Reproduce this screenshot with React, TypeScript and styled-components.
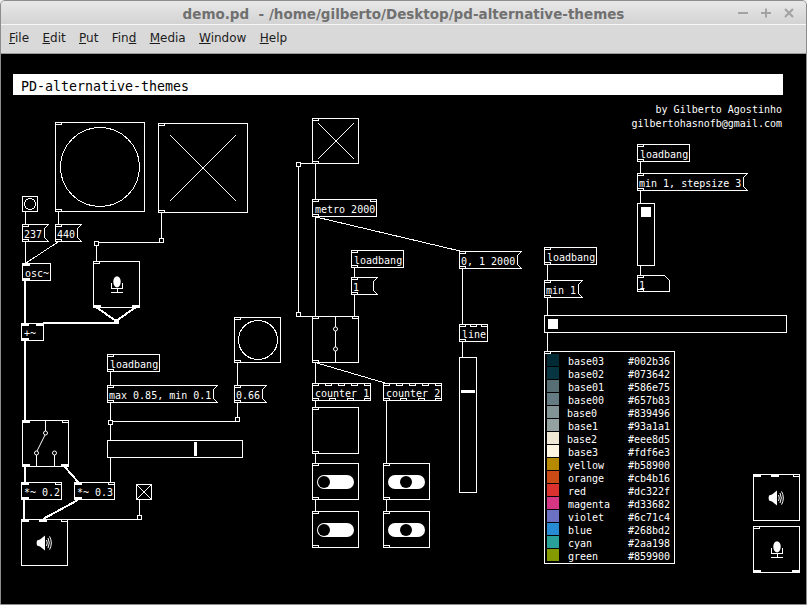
import * as React from "react"
import styled, { createGlobalStyle } from "styled-components"

// page position of the patch canvas, node coordinates below are page coordinates
const ORIGIN_X = 1
const ORIGIN_Y = 54

const Global = createGlobalStyle`
  html, body {
    margin: 0;
    padding: 0;
    background: #eeeeee;
  }
`

const Styled = {
  Window: styled.div`
    width: 807px;
    height: 605px;
    box-sizing: border-box;
    display: flex;
    flex-direction: column;
    overflow: hidden;
    border: 1px solid #8c8c8c;
    border-top-left-radius: 5px;
    border-top-right-radius: 5px;
    background: #d9d9d9;
    font-family: "DejaVu Sans", sans-serif;
  `,
  TitleBar: styled.div`
    height: 24px;
    flex: none;
    position: relative;
    display: flex;
    align-items: center;
    justify-content: center;
    padding-top: 2px;
    box-sizing: border-box;
    border-bottom: 1px solid #f7f7f7;
    background: linear-gradient(#e8e8e8, #d3d3d3);
  `,
  TitleText: styled.div`
    font-size: 13.5px;
    font-weight: bold;
    color: #707070;
    white-space: pre;
  `,
  Controls: styled.div`
    position: absolute;
    right: 12px;
    top: 7px;
    display: flex;
    gap: 13px;
  `,
  MenuBar: styled.div`
    height: 29px;
    flex: none;
    display: flex;
    align-items: center;
    gap: 13.35px;
    padding: 0 0 2px 8px;
    box-sizing: border-box;
    border-bottom: 1px solid #9a9a9a;
    background: #d9d9d9;
  `,
  MenuItem: styled.span`
    font-size: 12px;
    color: #1c1c1c;

    u {
      text-underline-offset: 1px;
    }
  `,
  Patch: styled.div`
    position: relative;
    flex: 1;
    background: #000;
    overflow: hidden;
    font-family: "DejaVu Sans Mono", monospace;
    font-size: 10px;
    color: #fff;
  `,
  Header: styled.div`
    display: flex;
    flex-direction: column;
    align-items: flex-end;
    padding: 20px 24px 0 12px;
  `,
  Banner: styled.div`
    align-self: stretch;
    margin-right: -1px;
    height: 21px;
    box-sizing: border-box;
    padding: 2px 0 0 8px;
    margin-bottom: 8px;
    background: #fff;
    color: #000;
    font-size: 13.3px;
    line-height: 21px;
  `,
  Credit: styled.div`
    line-height: 14px;
    white-space: pre;
  `,
  Wires: styled.svg`
    position: absolute;
    left: 0;
    top: 0;
  `,
  Node: styled.div<{ $x: number; $y: number; $w: number; $h: number; $bare?: boolean }>`
    position: absolute;
    left: ${(p) => p.$x - ORIGIN_X}px;
    top: ${(p) => p.$y - ORIGIN_Y}px;
    width: ${(p) => p.$w}px;
    height: ${(p) => p.$h}px;
    box-sizing: border-box;
    border: ${(p) => (p.$bare ? "none" : "1px solid #fff")};
    background: #000;
    display: flex;
    align-items: center;
    justify-content: center;
  `,
  Pad: styled.div<{ $x: number; $y: number; $solid?: boolean }>`
    position: absolute;
    left: ${(p) => p.$x - ORIGIN_X}px;
    top: ${(p) => p.$y - ORIGIN_Y}px;
    width: 5px;
    height: 5px;
    box-sizing: border-box;
    border: 1px solid #fff;
    background: ${(p) => (p.$solid ? "#fff" : "#000")};
  `,
  Label: styled.span`
    margin: 4px auto 0 2px;
    white-space: pre;
    line-height: 12px;
    position: relative;
  `,
  Outline: styled.svg`
    position: absolute;
    left: 0;
    top: 0;
  `,
  Ports: styled.div<{ $side: "top" | "bottom"; $bare?: boolean }>`
    position: absolute;
    left: ${(p) => (p.$bare ? 0 : -1)}px;
    right: ${(p) => (p.$bare ? 0 : -1)}px;
    ${(p) => p.$side}: ${(p) => (p.$bare ? 0 : -1)}px;
    display: flex;
    justify-content: space-between;
    align-items: ${(p) => (p.$side === "top" ? "flex-start" : "flex-end")};
  `,
  Port: styled.div<{ $signal?: boolean; $lean?: boolean }>`
    width: ${(p) => (p.$signal ? 8 : 7)}px;
    height: 3px;
    box-sizing: border-box;
    border: 1px solid #fff;
    background: ${(p) => (p.$signal ? "#fff" : "#000")};
    margin-right: ${(p) => (p.$lean ? 4 : 0)}px;
  `,
  Thumb: styled.div<{ $x: number; $y: number; $w: number; $h: number }>`
    margin: ${(p) => p.$y}px auto auto ${(p) => p.$x}px;
    width: ${(p) => p.$w}px;
    height: ${(p) => p.$h}px;
    background: #fff;
  `,
  Pill: styled.div`
    width: 37px;
    height: 14px;
    box-sizing: border-box;
    padding: 1px;
    border-radius: 7px;
    background: #fff;
    margin-top: 1px;
  `,
  Knob: styled.div<{ $on?: boolean }>`
    margin-left: ${(p) => (p.$on ? 11 : 0)}px;
    width: 12px;
    height: 12px;
    border-radius: 50%;
    background: #000;
  `,
  Palette: styled.div`
    margin: 0 auto auto 0;
    padding: 2px;
    display: flex;
    flex-direction: column;
    gap: 1px;
  `,
  Row: styled.div`
    display: flex;
    align-items: center;
    height: 12px;
  `,
  Swatch: styled.div<{ $color: string }>`
    width: 12px;
    height: 12px;
    background: ${(p) => p.$color};
  `,
  ColorName: styled.span<{ $nudge?: boolean }>`
    width: 60px;
    margin: 4px 0 0 ${(p) => (p.$nudge ? 8 : 9)}px;
    padding-right: ${(p) => (p.$nudge ? 1 : 0)}px;
    line-height: 12px;
  `,
  ColorHex: styled.span`
    margin-top: 4px;
    line-height: 12px;
  `,
}

const COLORS: [string, string, boolean?][] = [
  ["base03", "#002b36"],
  ["base02", "#073642"],
  ["base01", "#586e75"],
  ["base00", "#657b83"],
  ["base0", "#839496", true],
  ["base1", "#93a1a1"],
  ["base2", "#eee8d5", true],
  ["base3", "#fdf6e3"],
  ["yellow", "#b58900"],
  ["orange", "#cb4b16"],
  ["red", "#dc322f"],
  ["magenta", "#d33682"],
  ["violet", "#6c71c4"],
  ["blue", "#268bd2"],
  ["cyan", "#2aa198"],
  ["green", "#859900"],
]

// [x1, y1, x2, y2] control wires, 1px
const CONTROL_WIRES = [
  [25.5, 211, 25.5, 224],
  [58.5, 211, 58.5, 224],
  [25.5, 242, 25.5, 263],
  [58, 242, 26, 263],
  [161.5, 212, 161.5, 240],
  [96, 242.5, 161, 242.5],
  [96.5, 246, 96.5, 261],
  [110.5, 372, 110.5, 385],
  [110.5, 403, 110.5, 420],
  [110.5, 425, 110.5, 440],
  [110.5, 458, 110.5, 482],
  [237.5, 362, 237.5, 385],
  [237.5, 403, 237.5, 417],
  [111, 421.5, 238, 421.5],
  [45.5, 420, 45.5, 431],
  [139.5, 500, 139.5, 515],
  [66, 519.5, 141, 519.5],
  [298.5, 167, 298.5, 312],
  [299, 163.5, 316, 163.5],
  [299, 316.5, 316, 316.5],
  [315.5, 163, 315.5, 199],
  [315.5, 217, 315.5, 316],
  [316, 217, 460, 251],
  [354.5, 268, 354.5, 277],
  [354.5, 295, 354.5, 316],
  [462.5, 269, 462.5, 324],
  [462.5, 342, 462.5, 357],
  [315.5, 363, 315.5, 383],
  [317, 363, 385, 383],
  [315.5, 401, 315.5, 407],
  [315.5, 454, 315.5, 463],
  [315.5, 500, 315.5, 511],
  [386.5, 401, 386.5, 463],
  [386.5, 500, 386.5, 511],
  [640.5, 162, 640.5, 174],
  [640.5, 191, 640.5, 203],
  [640.5, 266, 640.5, 275],
  [547.5, 265, 547.5, 280],
  [547.5, 298, 547.5, 315],
  [547.5, 333, 547.5, 351],
]

// signal wires, 2px
const SIGNAL_WIRES = [
  [25, 281, 25, 323],
  [25, 340, 25, 420],
  [43, 323, 116, 323],
  [96, 307, 116, 321],
  [136, 307, 116, 321],
  [25, 467, 25, 482],
  [65, 467, 78, 482],
  [24, 500, 24, 519],
  [78, 500, 43, 519],
]

const Line = (props: { points: number[][]; width: number }) => (
  <>
    {props.points.map(([x1, y1, x2, y2], i) => (
      <line
        key={i}
        x1={x1}
        y1={y1}
        x2={x2}
        y2={y2}
        stroke="#fff"
        strokeWidth={props.width}
      />
    ))}
  </>
)

const WireLayer = () => (
  <Styled.Wires
    width={805}
    height={550}
    viewBox={`${ORIGIN_X} ${ORIGIN_Y} 805 550`}
    shapeRendering="crispEdges"
  >
    <Line points={CONTROL_WIRES} width={1} />
    <Line points={SIGNAL_WIRES} width={2} />
  </Styled.Wires>
)

type PortKind = "c" | "s" | "m"

type BoxProps = {
  x: number
  y: number
  w: number
  h: number
  text?: string
  top?: PortKind[]
  bottom?: PortKind[]
  children?: React.ReactNode
}

const PortRow = ({
  side,
  ports,
  bare,
}: {
  side: "top" | "bottom"
  ports?: PortKind[]
  bare?: boolean
}) =>
  ports ? (
    <Styled.Ports $side={side} $bare={bare}>
      {ports.map((kind, i) => (
        <Styled.Port key={i} $signal={kind !== "c"} $lean={kind === "m"} />
      ))}
    </Styled.Ports>
  ) : null

const Box = ({ x, y, w, h, text, top, bottom, children }: BoxProps) => (
  <Styled.Node $x={x} $y={y} $w={w} $h={h}>
    {text ? <Styled.Label>{text}</Styled.Label> : null}
    {children}
    <PortRow side="top" ports={top} />
    <PortRow side="bottom" ports={bottom} />
  </Styled.Node>
)

// outlined pd shape without a plain box border: message flag or number corner
const Shaped = ({
  x,
  y,
  w,
  h,
  points,
  text,
}: {
  x: number
  y: number
  w: number
  h: number
  points: string
  text: string
}) => (
  <Styled.Node $x={x} $y={y} $w={w} $h={h} $bare>
    <Styled.Outline width={w} height={h} shapeRendering="crispEdges">
      <polygon points={points} fill="none" stroke="#fff" />
    </Styled.Outline>
    <Styled.Label>{text}</Styled.Label>
    <PortRow side="top" ports={["c"]} bare />
    <PortRow side="bottom" ports={["c"]} bare />
  </Styled.Node>
)

const Message = ({ x, y, w, text }: { x: number; y: number; w: number; text: string }) => (
  <Shaped
    x={x}
    y={y}
    w={w}
    h={18}
    text={text}
    points={`0.5,0.5 ${w - 0.5},0.5 ${w - 4.5},4.5 ${w - 4.5},13.5 ${w - 0.5},17.5 0.5,17.5`}
  />
)

const NumberBox = ({ x, y, w, text }: { x: number; y: number; w: number; text: string }) => (
  <Shaped
    x={x}
    y={y}
    w={w}
    h={17}
    text={text}
    points={`0.5,0.5 ${w - 5.5},0.5 ${w - 0.5},5.5 ${w - 0.5},16.5 0.5,16.5`}
  />
)

const CircleIcon = ({ size }: { size: number }) => (
  <svg width={size} height={size} shapeRendering="crispEdges">
    <circle cx={size / 2} cy={size / 2} r={size / 2 - 0.5} fill="none" stroke="#fff" />
  </svg>
)

const CrossIcon = ({ size }: { size: number }) => (
  <svg width={size} height={size} shapeRendering="crispEdges">
    <line x1={0} y1={0} x2={size} y2={size} stroke="#fff" />
    <line x1={size} y1={0} x2={0} y2={size} stroke="#fff" />
  </svg>
)

const SpeakerIcon = () => (
  <svg width={17} height={16} viewBox="0 0 17 16" fill="none">
    <path d="M1 5.5 L4 4.6 L9 0.5 V15.5 L4 11.4 L1 10.5 Q0.2 8 1 5.5 Z" fill="#fff" />
    <path d="M10.5 5 Q12 8 10.5 11" stroke="#fff" />
    <path d="M12 3 Q14.6 8 12 13" stroke="#fff" />
    <path d="M13.6 1.4 Q17 8 13.6 14.6" stroke="#fff" />
  </svg>
)

const MicIcon = () => (
  <svg width={12} height={18} viewBox="0 0 12 18" fill="none">
    <ellipse cx={6} cy={5.8} rx={3.7} ry={5.6} fill="#fff" />
    <path d="M0.5 7 V12.5 H11.5 V7" stroke="#fff" shapeRendering="crispEdges" />
    <path d="M6.5 12 V17 M0 16.5 H12" stroke="#fff" shapeRendering="crispEdges" />
  </svg>
)

const Toggle = ({ x, y, on }: { x: number; y: number; on?: boolean }) => (
  <Box x={x} y={y} w={47} h={37} top={["c"]} bottom={["c"]}>
    <Styled.Pill>
      <Styled.Knob $on={on} />
    </Styled.Pill>
  </Box>
)

const MENUS: [string, string, string][] = [
  ["", "F", "ile"],
  ["", "E", "dit"],
  ["", "P", "ut"],
  ["Fin", "d", ""],
  ["", "M", "edia"],
  ["", "W", "indow"],
  ["", "H", "elp"],
]

export default function App() {
  return (
    <>
      <Global />
      <Styled.Window>
        <Styled.TitleBar>
          <Styled.TitleText>{"demo.pd  - /home/gilberto/Desktop/pd-alternative-themes"}</Styled.TitleText>
          <Styled.Controls>
            <svg width={10} height={10}>
              <path d="M0 5 H10" stroke="#a3a3a3" strokeWidth={2} />
            </svg>
            <svg width={10} height={10}>
              <path d="M0 5 H10 M5 0.5 V9.5" stroke="#a3a3a3" strokeWidth={2} />
            </svg>
            <svg width={10} height={10}>
              <path d="M1 1 L9 9 M9 1 L1 9" stroke="#a3a3a3" strokeWidth={2.2} />
            </svg>
          </Styled.Controls>
        </Styled.TitleBar>
        <Styled.MenuBar>
          {MENUS.map(([before, key, after]) => (
            <Styled.MenuItem key={before + key + after}>
              {before}
              <u>{key}</u>
              {after}
            </Styled.MenuItem>
          ))}
        </Styled.MenuBar>
        <Styled.Patch>
          <Styled.Header>
            <Styled.Banner>PD-alternative-themes</Styled.Banner>
            <Styled.Credit>by Gilberto Agostinho</Styled.Credit>
            <Styled.Credit>gilbertohasnofb@gmail.com</Styled.Credit>
          </Styled.Header>
          <WireLayer />

          {/* left column: osc, mic and output */}
          <Box x={55} y={122} w={90} h={90} top={["c"]} bottom={["c"]}>
            <CircleIcon size={80} />
          </Box>
          <Box x={158} y={123} w={90} h={90} top={["c"]} bottom={["c"]}>
            <CrossIcon size={66} />
          </Box>
          <Box x={22} y={196} w={16} h={16}>
            <CircleIcon size={12} />
          </Box>
          <Message x={22} y={224} w={27} text="237" />
          <Message x={55} y={224} w={27} text="440" />
          <Styled.Pad $x={94} $y={241} />
          <Styled.Pad $x={159} $y={238} />
          <Box x={22} y={263} w={29} h={18} text="osc~" top={["s"]} bottom={["s"]} />
          <Box x={93} y={261} w={47} h={47} top={["c"]} bottom={["s", "s"]}>
            <MicIcon />
          </Box>
          <Styled.Pad $x={114} $y={319} $solid />
          <Box x={21} y={323} w={23} h={18} text="+~" top={["s", "s"]} bottom={["s"]} />

          <Box x={107} y={354} w={53} h={18} text="loadbang" top={["c"]} bottom={["c"]} />
          <Message x={107} y={385} w={111} text="max 0.85, min 0.1" />
          <Box x={234} y={317} w={47} h={46} top={["c"]} bottom={["c"]}>
            <CircleIcon size={40} />
          </Box>
          <Message x={234} y={385} w={33} text="0.66" />
          <Styled.Pad $x={108} $y={420} />
          <Styled.Pad $x={235} $y={417} />
          <Box x={107} y={440} w={136} h={18}>
            <Styled.Thumb $x={86} $y={1} $w={3} $h={14} />
          </Box>

          <Box x={22} y={420} w={47} h={47} top={["s", "c"]} bottom={["s", "s"]}>
            <svg width={45} height={45} fill="none" stroke="#fff">
              <path d="M22.5 0 V10 M22 14 L14 30 M13.5 34 V45 M31.5 34 V45" />
              <circle cx={22.5} cy={12} r={2} />
              <circle cx={13.5} cy={32} r={2} />
              <circle cx={31.5} cy={32} r={2} />
            </svg>
          </Box>
          <Box x={21} y={482} w={41} h={18} text="*~ 0.2" top={["s", "c"]} bottom={["s"]} />
          <Box x={74} y={482} w={41} h={18} text="*~ 0.3" top={["s", "c"]} bottom={["s"]} />
          <Box x={136} y={484} w={16} h={16}>
            <CrossIcon size={14} />
          </Box>
          <Styled.Pad $x={137} $y={515} />
          <Box x={21} y={519} w={47} h={47} top={["s", "m", "c"]}>
            <SpeakerIcon />
          </Box>

          {/* middle column: metro and counters */}
          <Box x={312} y={118} w={47} h={46} top={["c"]} bottom={["c"]}>
            <CrossIcon size={36} />
          </Box>
          <Styled.Pad $x={296} $y={162} />
          <Styled.Pad $x={296} $y={312} />
          <Box x={312} y={199} w={65} h={18} text="metro 2000" top={["c", "c"]} bottom={["c"]} />
          <Box x={351} y={250} w={53} h={18} text="loadbang" top={["c"]} bottom={["c"]} />
          <Message x={351} y={277} w={27} text="1" />
          <Message x={459} y={251} w={63} text="0, 1 2000" />
          <Box x={459} y={324} w={29} h={18} text="line" top={["c", "c", "c"]} bottom={["c"]} />
          <Box x={312} y={316} w={47} h={47} top={["c", "c"]} bottom={["c"]}>
            <svg width={45} height={45} fill="none" stroke="#fff">
              <path d="M22.5 0 V10 M22.5 14 V30 M22.5 34 V45" />
              <circle cx={22.5} cy={12} r={2} />
              <circle cx={22.5} cy={32} r={2} />
            </svg>
          </Box>
          <Box x={459} y={357} w={18} h={136}>
            <Styled.Thumb $x={1} $y={32} $w={14} $h={3} />
          </Box>
          <Box x={312} y={383} w={59} h={18} text="counter 1" top={["c", "c", "c", "c", "c"]} bottom={["c", "c", "c", "c"]} />
          <Box x={383} y={383} w={59} h={18} text="counter 2" top={["c", "c", "c", "c", "c"]} bottom={["c", "c", "c", "c"]} />
          <Box x={312} y={407} w={47} h={47} top={["c"]} bottom={["c"]} />
          <Toggle x={312} y={463} />
          <Toggle x={312} y={511} />
          <Toggle x={383} y={463} on />
          <Toggle x={383} y={511} on />

          {/* right column */}
          <Box x={637} y={144} w={53} h={18} text="loadbang" top={["c"]} bottom={["c"]} />
          <Message x={637} y={173} w={111} text="min 1, stepsize 3" />
          <Box x={637} y={203} w={18} h={63}>
            <Styled.Thumb $x={3} $y={3} $w={10} $h={10} />
          </Box>
          <NumberBox x={637} y={275} w={33} text="1" />
          <Box x={544} y={247} w={53} h={18} text="loadbang" top={["c"]} bottom={["c"]} />
          <Message x={544} y={280} w={39} text="min 1" />
          <Box x={544} y={315} w={243} h={18}>
            <Styled.Thumb $x={3} $y={3} $w={10} $h={10} />
          </Box>

          <Box x={544} y={351} w={131} h={213} top={["c"]}>
            <Styled.Palette>
              {COLORS.map(([name, hex, nudge]) => (
                <Styled.Row key={name}>
                  <Styled.Swatch $color={hex} />
                  <Styled.ColorName $nudge={nudge}>{name}</Styled.ColorName>
                  <Styled.ColorHex>{hex}</Styled.ColorHex>
                </Styled.Row>
              ))}
            </Styled.Palette>
          </Box>

          <Box x={753} y={474} w={47} h={47} top={["s", "m", "c"]}>
            <SpeakerIcon />
          </Box>
          <Box x={753} y={526} w={47} h={47} top={["c"]} bottom={["s", "s"]}>
            <MicIcon />
          </Box>
        </Styled.Patch>
      </Styled.Window>
    </>
  )
}
